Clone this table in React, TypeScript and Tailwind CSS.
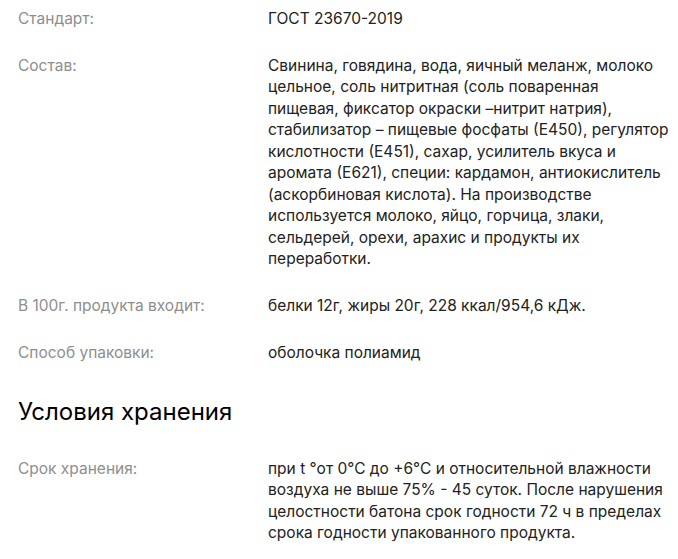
import React from "react";

const Row = ({ label, children }: { label: string; children: React.ReactNode }) => (
  <div className="flex">
    <div className="w-[250px] shrink-0 text-[#8e8e8e]">{label}</div>
    <div className="w-[430px] shrink-0 text-[#222222]">{children}</div>
  </div>
);

export default function App() {
  return (
    <div
      className="w-[678px] h-[559px] overflow-hidden bg-white pl-[18px] pt-[7.5px] text-[15.5px] leading-[21.5px]"
      style={{ fontFamily: "Inter, 'Noto Sans', sans-serif" }}
    >
      <div className="flex flex-col gap-[25.5px]">
        <Row label="Стандарт:">ГОСТ 23670-2019</Row>
        <Row label="Состав:">
          Свинина, говядина, вода, яичный меланж, молоко
          <br />
          цельное, соль нитритная (соль поваренная
          <br />
          пищевая, фиксатор окраски –нитрит натрия),
          <br />
          стабилизатор – пищевые фосфаты (Е450), регулятор
          <br />
          кислотности (Е451), сахар, усилитель вкуса и
          <br />
          аромата (Е621), специи: кардамон, антиокислитель
          <br />
          (аскорбиновая кислота). На производстве
          <br />
          используется молоко, яйцо, горчица, злаки,
          <br />
          сельдерей, орехи, арахис и продукты их
          <br />
          переработки.
        </Row>
        <Row label="В 100г. продукта входит:">белки 12г, жиры 20г, 228 ккал/954,6 кДж.</Row>
        <Row label="Способ упаковки:">оболочка полиамид</Row>
      </div>
      <h2 className="mt-[32px] mb-[30px] text-[24px] leading-[32px] text-black font-normal">Условия хранения</h2>
      <Row label="Срок хранения:">
        при t °от 0°С до +6°С и относительной влажности
        <br />
        воздуха не выше 75% - 45 суток. После нарушения
        <br />
        целостности батона срок годности 72 ч в пределах
        <br />
        срока годности упакованного продукта.
      </Row>
    </div>
  );
}
